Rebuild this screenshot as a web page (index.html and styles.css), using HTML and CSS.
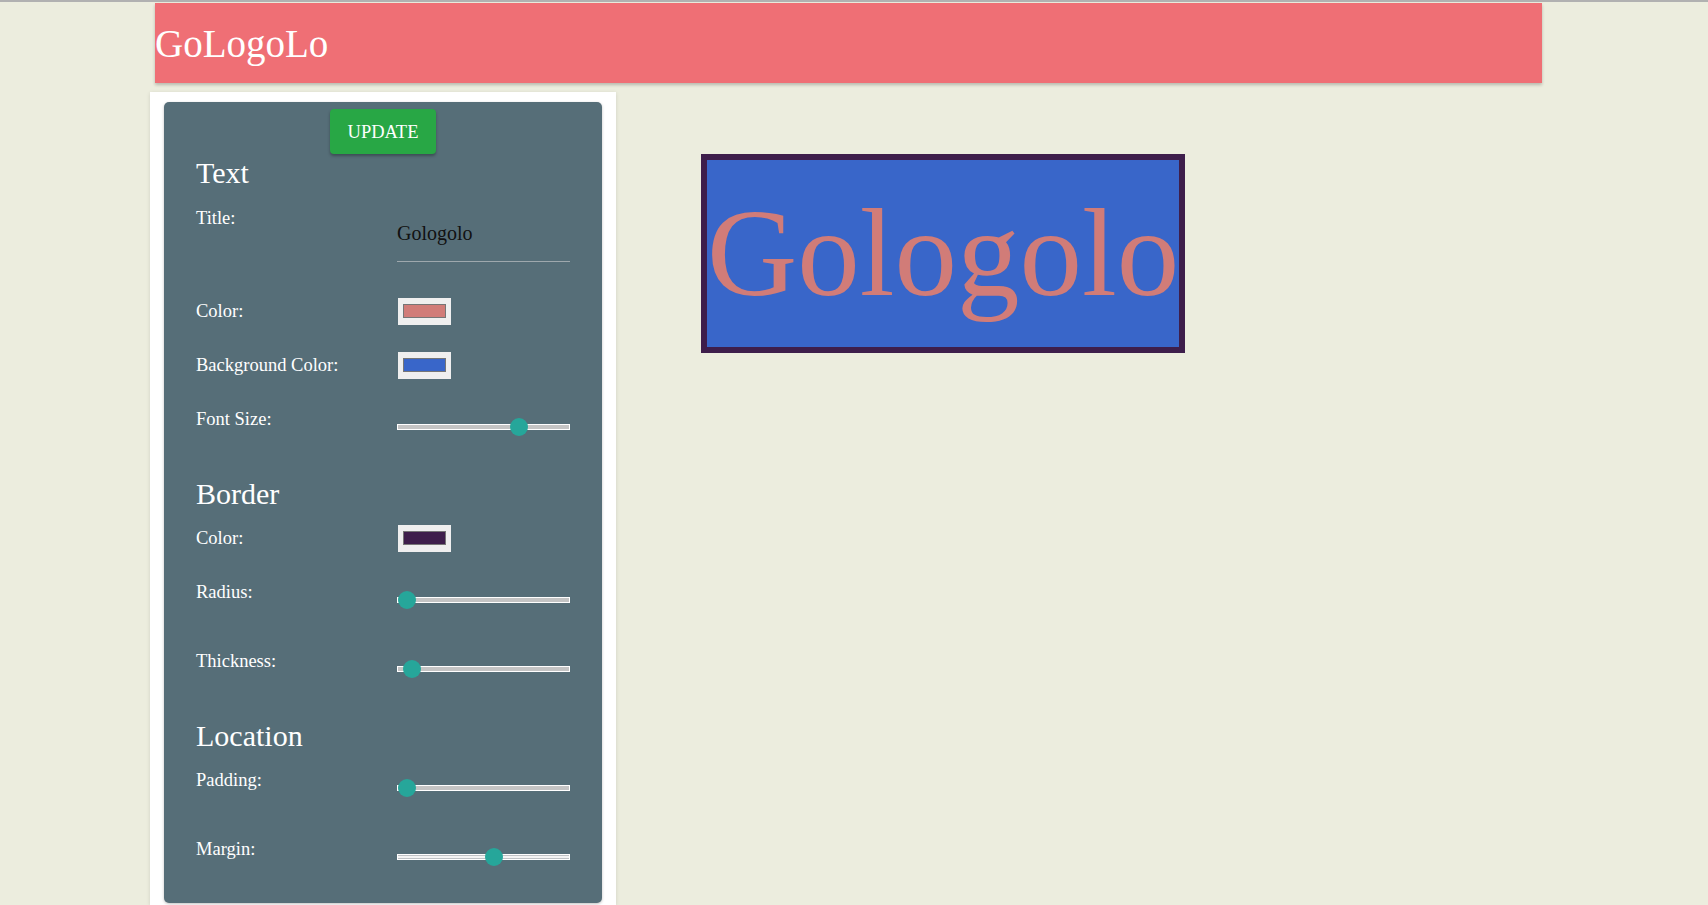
FILE: index.html
```html
<!DOCTYPE html>
<html lang="en">
<head>
<meta charset="utf-8">
<title>GoLogoLo</title>
<link rel="stylesheet" href="styles.css">
</head>
<body>
  <header class="navbar">
    <div class="brand">GoLogoLo</div>
  </header>
  <main class="workspace">
    <aside class="panel">
      <form class="card">
        <div class="actions">
          <button type="button" class="btn-update">UPDATE</button>
        </div>

        <h2 class="section-title">Text</h2>
        <div class="row row-title">
          <label class="label">Title:</label>
          <input class="text-input" type="text" value="Gologolo">
        </div>
        <div class="row">
          <label class="label">Color:</label>
          <input class="color-input" type="color" value="#d17c78">
        </div>
        <div class="row">
          <label class="label">Background Color:</label>
          <input class="color-input" type="color" value="#3966c9">
        </div>
        <div class="row row-slider">
          <label class="label">Font Size:</label>
          <input class="range" type="range" min="0" max="1000" value="735">
        </div>

        <h2 class="section-title">Border</h2>
        <div class="row">
          <label class="label">Color:</label>
          <input class="color-input" type="color" value="#3e1e4b">
        </div>
        <div class="row row-slider">
          <label class="label">Radius:</label>
          <input class="range" type="range" min="0" max="1000" value="0">
        </div>
        <div class="row row-slider">
          <label class="label">Thickness:</label>
          <input class="range" type="range" min="0" max="1000" value="30">
        </div>

        <h2 class="section-title">Location</h2>
        <div class="row row-slider">
          <label class="label">Padding:</label>
          <input class="range" type="range" min="0" max="1000" value="0">
        </div>
        <div class="row row-slider">
          <label class="label">Margin:</label>
          <input class="range range-split" type="range" min="0" max="1000" value="568">
        </div>
      </form>
    </aside>

    <section class="canvas">
      <div class="logo">Gologolo</div>
    </section>
  </main>
</body>
</html>
```

FILE: styles.css
```css
html {
  overflow: hidden;
  border-top: 2px solid #b1b1b1;
  background: #ecedde;
}

body {
  margin: 0;
  height: 903px;
  font-family: "Liberation Serif", "Times New Roman", serif;
  background: #ecedde;
  overflow: hidden;
}

.navbar {
  margin: 1px 0 0 155px;
  width: 1387px;
  height: 80px;
  background: #ef6f75;
  display: flex;
  align-items: center;
  box-shadow: 0 2px 3px rgba(0, 0, 0, 0.22);
}

.brand {
  color: #ffffff;
  font-size: 39px;
}

.workspace {
  display: flex;
  align-items: flex-start;
  margin: 9px 0 0 150px;
}

.panel {
  width: 466px;
  height: 813px;
  box-sizing: border-box;
  padding: 10px 14px 0;
  background: #ffffff;
  box-shadow: 0 1px 4px rgba(0, 0, 0, 0.12);
}

.card {
  height: 801px;
  box-sizing: border-box;
  margin: 0;
  padding: 7px 0 0 32px;
  background: #566e78;
  border-radius: 5px;
  box-shadow: 0 1px 3px rgba(0, 0, 0, 0.25);
}

.actions {
  display: flex;
  justify-content: center;
  margin-left: -32px;
}

.btn-update {
  width: 106px;
  height: 45px;
  padding: 0;
  border: none;
  border-radius: 4px;
  background: #28a745;
  color: #ffffff;
  font-family: inherit;
  font-size: 18.5px;
  line-height: 47px;
  box-shadow: 0 2px 3px rgba(0, 0, 0, 0.3);
  cursor: pointer;
}

.section-title {
  margin: 0 0 16px;
  height: 34px;
  font-size: 30px;
  line-height: 34px;
  font-weight: normal;
  color: #ffffff;
}

.actions + .section-title {
  margin-top: 2px;
}

.row {
  display: grid;
  grid-template-columns: 201px 173px;
  align-items: start;
  height: 54px;
}

.row-title {
  height: 94px;
}

.row-slider {
  height: 69px;
}

.label {
  padding-top: 1px;
  color: #ffffff;
  font-size: 18.5px;
  line-height: 21px;
}

.row-title .label {
  padding-top: 2px;
}

.text-input {
  box-sizing: border-box;
  width: 173px;
  height: 49px;
  margin-top: 7px;
  padding: 0 0 7px;
  border: none;
  border-bottom: 1px solid #9ea8ad;
  background: transparent;
  color: #111111;
  font-family: inherit;
  font-size: 20px;
  outline: none;
}

.color-input {
  -webkit-appearance: none;
  appearance: none;
  box-sizing: border-box;
  width: 53px;
  height: 27px;
  margin: -2px 0 0 1px;
  padding: 6px 5px 7px;
  border: none;
  border-radius: 0;
  background: #efefef;
  cursor: pointer;
}

.color-input::-webkit-color-swatch-wrapper {
  padding: 0;
}

.color-input::-webkit-color-swatch {
  border: 1px solid #767676;
  border-radius: 0;
}

.range {
  -webkit-appearance: none;
  appearance: none;
  width: 173px;
  height: 18px;
  margin: 10px 0 0;
  padding: 0;
  background: transparent;
}

.range::-webkit-slider-runnable-track {
  height: 6px;
  box-sizing: border-box;
  border: 1px solid #ffffff;
  background: #c4c4c4;
}

.range-split::-webkit-slider-runnable-track {
  background: linear-gradient(#bfc2c5 0 35%, #f4f4f4 35% 65%, #bfc2c5 65%);
}

.range::-webkit-slider-thumb {
  -webkit-appearance: none;
  appearance: none;
  width: 18px;
  height: 18px;
  margin-top: -7px;
  border: none;
  border-radius: 50%;
  background: #26a69a;
}

.canvas {
  margin: 62px 0 0 85px;
}

.logo {
  display: inline-block;
  padding: 0;
  border: 6px solid #3e1e4b;
  background: #3966c9;
  color: #d17c78;
  font-size: 125px;
  line-height: 187px;
  white-space: nowrap;
}
```
